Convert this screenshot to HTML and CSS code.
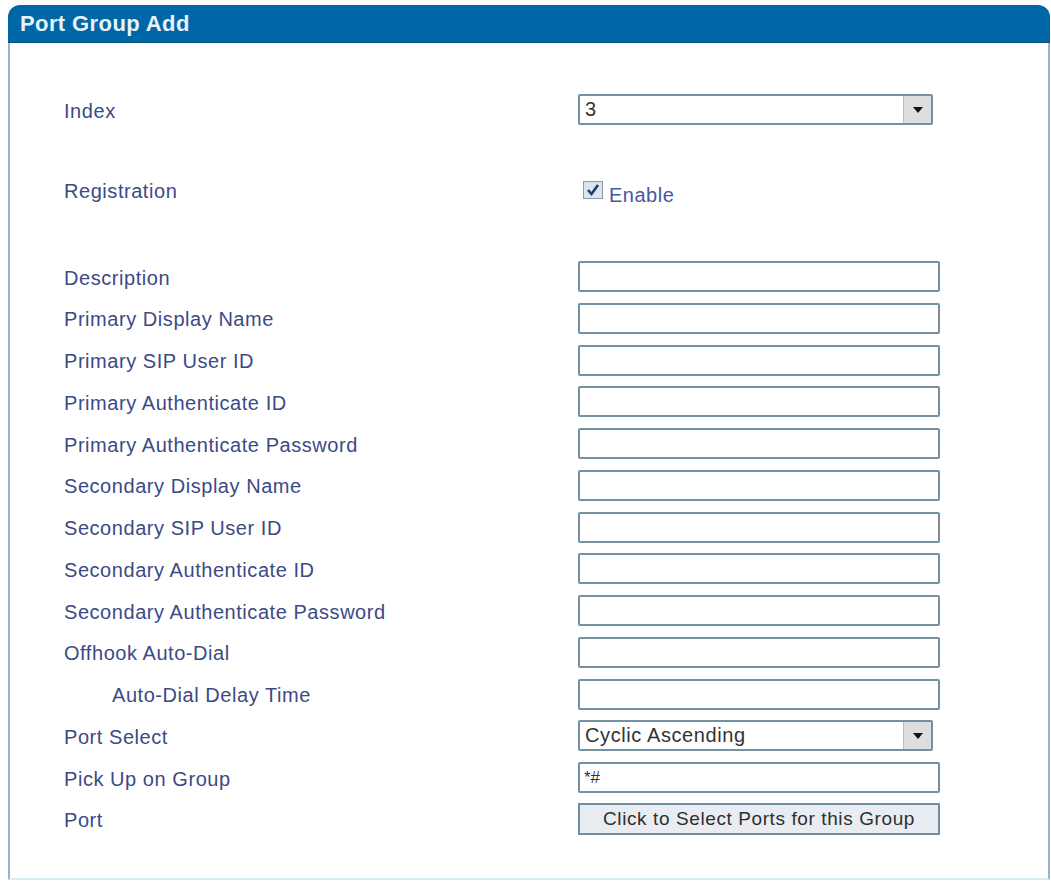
FILE: index.html
```html
<!DOCTYPE html>
<html>
<head>
<meta charset="utf-8">
<title>Port Group Add</title>
<link rel="stylesheet" href="styles.css">
</head>
<body>
<div class="panel">
  <div class="panel-head">Port Group Add</div>
  <div class="panel-body">
    <div class="form">
      <div class="row">
        <div class="label">Index</div>
        <div class="select"><span class="select-text">3</span><span class="select-btn"><span class="tri"></span></span></div>
      </div>
      <div class="row row-reg">
        <div class="label">Registration</div>
        <label class="check"><span class="box"><svg viewBox="0 0 16 16" width="16" height="16"><path d="M3 8 L6.5 12 L13 3" fill="none" stroke="#1f3a80" stroke-width="2.6"/></svg></span><span class="check-text">Enable</span></label>
      </div>
      <div class="row"><div class="label">Description</div><div class="input"></div></div>
      <div class="row"><div class="label">Primary Display Name</div><div class="input"></div></div>
      <div class="row"><div class="label">Primary SIP User ID</div><div class="input"></div></div>
      <div class="row"><div class="label">Primary Authenticate ID</div><div class="input"></div></div>
      <div class="row"><div class="label">Primary Authenticate Password</div><div class="input"></div></div>
      <div class="row"><div class="label">Secondary Display Name</div><div class="input"></div></div>
      <div class="row"><div class="label">Secondary SIP User ID</div><div class="input"></div></div>
      <div class="row"><div class="label">Secondary Authenticate ID</div><div class="input"></div></div>
      <div class="row"><div class="label">Secondary Authenticate Password</div><div class="input"></div></div>
      <div class="row"><div class="label">Offhook Auto-Dial</div><div class="input"></div></div>
      <div class="row"><div class="label indent">Auto-Dial Delay Time</div><div class="input"></div></div>
      <div class="row">
        <div class="label">Port Select</div>
        <div class="select"><span class="select-text">Cyclic Ascending</span><span class="select-btn"><span class="tri"></span></span></div>
      </div>
      <div class="row"><div class="label">Pick Up on Group</div><div class="input"><span class="input-text">*#</span></div></div>
      <div class="row"><div class="label">Port</div><div class="button">Click to Select Ports for this Group</div></div>
    </div>
  </div>
</div>
</body>
</html>
```
FILE: styles.css
```css
html, body {
  margin: 0;
  padding: 0;
  background: #ffffff;
}

body {
  font-family: "Liberation Sans", Arial, sans-serif;
}

.panel {
  margin: 5px 1px 0 8px;
}

.panel-head {
  height: 37px;
  background: #0067a7;
  border-bottom: 1px solid #0a4f7c;
  border-radius: 12px 12px 0 0;
  color: #e6f3fb;
  font-weight: bold;
  font-size: 22px;
  letter-spacing: 0.4px;
  line-height: 38px;
  padding-left: 12px;
}

.panel-body {
  height: 837px;
  box-sizing: border-box;
  border-left: 2px solid #9cb3c3;
  border-right: 2px solid #9cb3c3;
  border-bottom: 2px solid #d3edf5;
  padding: 51px 0 0 54px;
}

.form {
  display: flex;
  flex-direction: column;
  gap: 10.75px;
}

.row {
  display: flex;
  align-items: center;
  height: 31px;
}

.row-reg {
  margin: 38.75px 0 44.75px;
}

.label {
  width: 514px;
  flex: none;
  color: #3c4a86;
  font-size: 20px;
  letter-spacing: 0.55px;
  padding-top: 3px;
}

.label.indent {
  padding-left: 48px;
  width: 466px;
}

.input {
  width: 362px;
  height: 31px;
  box-sizing: border-box;
  border: 2px solid #7490a3;
  border-radius: 2px;
  background: #ffffff;
  display: flex;
  align-items: center;
  padding-left: 4px;
}

.input-text {
  color: #333333;
  font-size: 17px;
}

.select {
  width: 355px;
  height: 31px;
  box-sizing: border-box;
  border: 2px solid #7490a3;
  border-radius: 2px;
  background: #ffffff;
  display: flex;
  align-items: center;
  justify-content: space-between;
}

.select-text {
  color: #333333;
  font-size: 20px;
  padding-left: 5px;
  letter-spacing: 0.6px;
}

.select-btn {
  width: 28px;
  height: 27px;
  box-sizing: border-box;
  background: #dcdddf;
  border-left: 1px solid #b9bcc0;
  display: flex;
  align-items: center;
  justify-content: center;
}

.tri {
  width: 0;
  height: 0;
  border-left: 5px solid transparent;
  border-right: 5px solid transparent;
  border-top: 6px solid #111111;
}

.check {
  display: flex;
  align-items: center;
  gap: 6px;
  padding-left: 5px;
}

.box {
  width: 20px;
  height: 18px;
  box-sizing: border-box;
  border: 1px solid #8d9aa8;
  background: #dde4ec;
  display: flex;
  align-items: center;
  justify-content: center;
}

.check-text {
  color: #4659a0;
  font-size: 20px;
  letter-spacing: 0.5px;
  padding-top: 10px;
}

.button {
  width: 362px;
  height: 32px;
  box-sizing: border-box;
  border: 2px solid #6f8ea2;
  background: #e9edf1;
  color: #2f2f2f;
  font-size: 19px;
  letter-spacing: 0.6px;
  display: flex;
  align-items: center;
  justify-content: center;
}
```
